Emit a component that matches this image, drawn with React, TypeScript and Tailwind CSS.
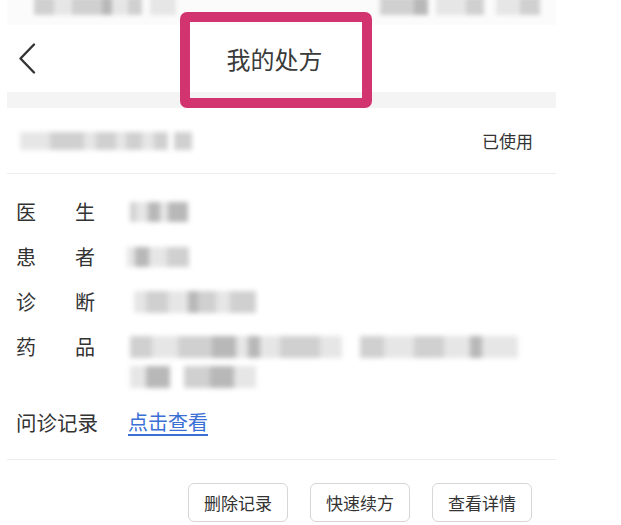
import React from "react";

type Block = { w: number; c: string };

function Smudge({ blocks, h = 18, blur = "blur-[2.5px]" }: { blocks: Block[]; h?: number; blur?: string }) {
  return (
    <div className={`flex items-center ${blur}`} style={{ height: h }}>
      {blocks.map((b, i) => (
        <div key={i} style={{ width: b.w, height: h, backgroundColor: b.c }} />
      ))}
    </div>
  );
}

const L = "#e6e6e6";
const M = "#d0d0d0";
const D = "#b8b8b8";
const W = "transparent";

function Row({ label, children }: { label: React.ReactNode; children: React.ReactNode }) {
  return (
    <div className="flex items-start">
      <div className="w-[80px] shrink-0 h-[30px] flex items-center">{label}</div>
      <div className="ml-[34px] flex-1">{children}</div>
    </div>
  );
}

function Spread({ a, b }: { a: string; b: string }) {
  return (
    <div className="w-[80px] flex justify-between">
      <span>{a}</span>
      <span className="mr-[1px]">{b}</span>
    </div>
  );
}

export default function App() {
  return (
    <div
      className="relative w-[621px] h-[525px] overflow-hidden bg-white text-[#333]"
      style={{ fontFamily: '"Noto Sans CJK SC", "Noto Sans", sans-serif' }}
    >
      <div className="ml-[7px] w-[549px] flex flex-col">
        {/* status bar (blurred) */}
        <div className="h-[25px] bg-[#fbfbfb] flex items-start">
          <div className="ml-[27px] -mt-[3px]">
            <Smudge
              h={18}
              blur="blur-[2px]"
              blocks={[
                { w: 20, c: M }, { w: 18, c: L }, { w: 30, c: M }, { w: 10, c: D },
                { w: 16, c: L }, { w: 14, c: M }, { w: 8, c: W }, { w: 26, c: L },
              ]}
            />
          </div>
          <div className="ml-[204px] -mt-[3px]">
            <Smudge
              h={18}
              blur="blur-[2px]"
              blocks={[
                { w: 34, c: M }, { w: 14, c: D }, { w: 8, c: W }, { w: 30, c: L },
                { w: 18, c: M }, { w: 12, c: W }, { w: 24, c: L }, { w: 20, c: M },
              ]}
            />
          </div>
        </div>

        {/* header */}
        <div className="h-[67px] flex items-center">
          <div className="w-[60px] pl-[11px] flex items-center">
            <svg width="18" height="31" viewBox="0 0 18 31" fill="none">
              <polyline points="16,1.5 2.5,15.5 16,29.5" stroke="#333" strokeWidth="2.4" strokeLinecap="round" strokeLinejoin="round" />
            </svg>
          </div>
          <div className="flex-1 flex justify-center pr-[74px]">
            <span className="text-[24px] leading-none text-[#3a3a3a]">我的处方</span>
          </div>
        </div>

        <div className="h-[16px] bg-[#f4f4f4]" />

        {/* order line */}
        <div className="h-[65px] flex items-center justify-between pl-[13px] pr-[23px]">
          <Smudge
            h={18}
            blocks={[
              { w: 30, c: L }, { w: 34, c: M }, { w: 12, c: L }, { w: 20, c: M },
              { w: 10, c: L }, { w: 16, c: M }, { w: 12, c: L }, { w: 14, c: M },
              { w: 6, c: W }, { w: 18, c: M },
            ]}
          />
          <span className="text-[17px]">已使用</span>
        </div>
        <div className="h-[1px] bg-[#ececec]" />

        {/* details */}
        <div className="pl-[9px] pt-[23px] flex flex-col gap-[15px] text-[20px] leading-[30px]">
          <Row label={<Spread a="医" b="生" />}>
            <div className="h-[30px] flex items-center">
              <Smudge h={20} blocks={[{ w: 6, c: M }, { w: 12, c: L }, { w: 12, c: D }, { w: 8, c: L }, { w: 20, c: D }]} />
            </div>
          </Row>
          <Row label={<Spread a="患" b="者" />}>
            <div className="h-[30px] flex items-center -ml-[3px]">
              <Smudge h={20} blocks={[{ w: 8, c: L }, { w: 14, c: D }, { w: 18, c: L }, { w: 22, c: M }]} />
            </div>
          </Row>
          <Row label={<Spread a="诊" b="断" />}>
            <div className="h-[30px] flex items-center ml-[4px]">
              <Smudge h={22} blocks={[{ w: 12, c: L }, { w: 22, c: M }, { w: 20, c: L }, { w: 10, c: D }, { w: 18, c: M }, { w: 14, c: L }, { w: 26, c: M }]} />
            </div>
          </Row>
          <Row label={<Spread a="药" b="品" />}>
            <div className="flex flex-col">
              <div className="h-[30px] flex items-center">
                <Smudge
                  h={22}
                  blocks={[
                    { w: 22, c: M }, { w: 26, c: L }, { w: 34, c: M }, { w: 24, c: D },
                    { w: 12, c: L }, { w: 12, c: D }, { w: 20, c: L }, { w: 40, c: M },
                    { w: 22, c: L }, { w: 18, c: W }, { w: 24, c: M }, { w: 30, c: L },
                    { w: 30, c: M }, { w: 26, c: L }, { w: 12, c: D }, { w: 36, c: L },
                  ]}
                />
              </div>
              <div className="h-[30px] flex items-center">
                <Smudge h={22} blocks={[{ w: 16, c: L }, { w: 24, c: D }, { w: 14, c: W }, { w: 26, c: M }, { w: 24, c: D }, { w: 22, c: L }]} />
              </div>
            </div>
          </Row>
          <div className="flex items-center whitespace-nowrap">
            <span className="w-[84px] shrink-0 text-[20.5px]">问诊记录</span>
            <span className="ml-[28px] text-[#3a6fd6] underline underline-offset-[4px] decoration-[1.5px]">点击查看</span>
          </div>
        </div>

        <div className="mt-[22px] h-[1px] bg-[#ececec]" />

        <div className="pt-[23px] pr-[24px] flex justify-end gap-[22px]">
          {["删除记录", "快速续方", "查看详情"].map((t) => (
            <button
              key={t}
              className="w-[100px] h-[39px] border border-[#d6d6d6] rounded-[6px] bg-white text-[17px] text-[#333] flex items-center justify-center"
            >
              {t}
            </button>
          ))}
        </div>
      </div>

      {/* highlight annotation */}
      <div className="absolute left-[180px] top-[12px] w-[192px] h-[96px] border-[10px] border-[#d23470] rounded-[7px] pointer-events-none" />
    </div>
  );
}
